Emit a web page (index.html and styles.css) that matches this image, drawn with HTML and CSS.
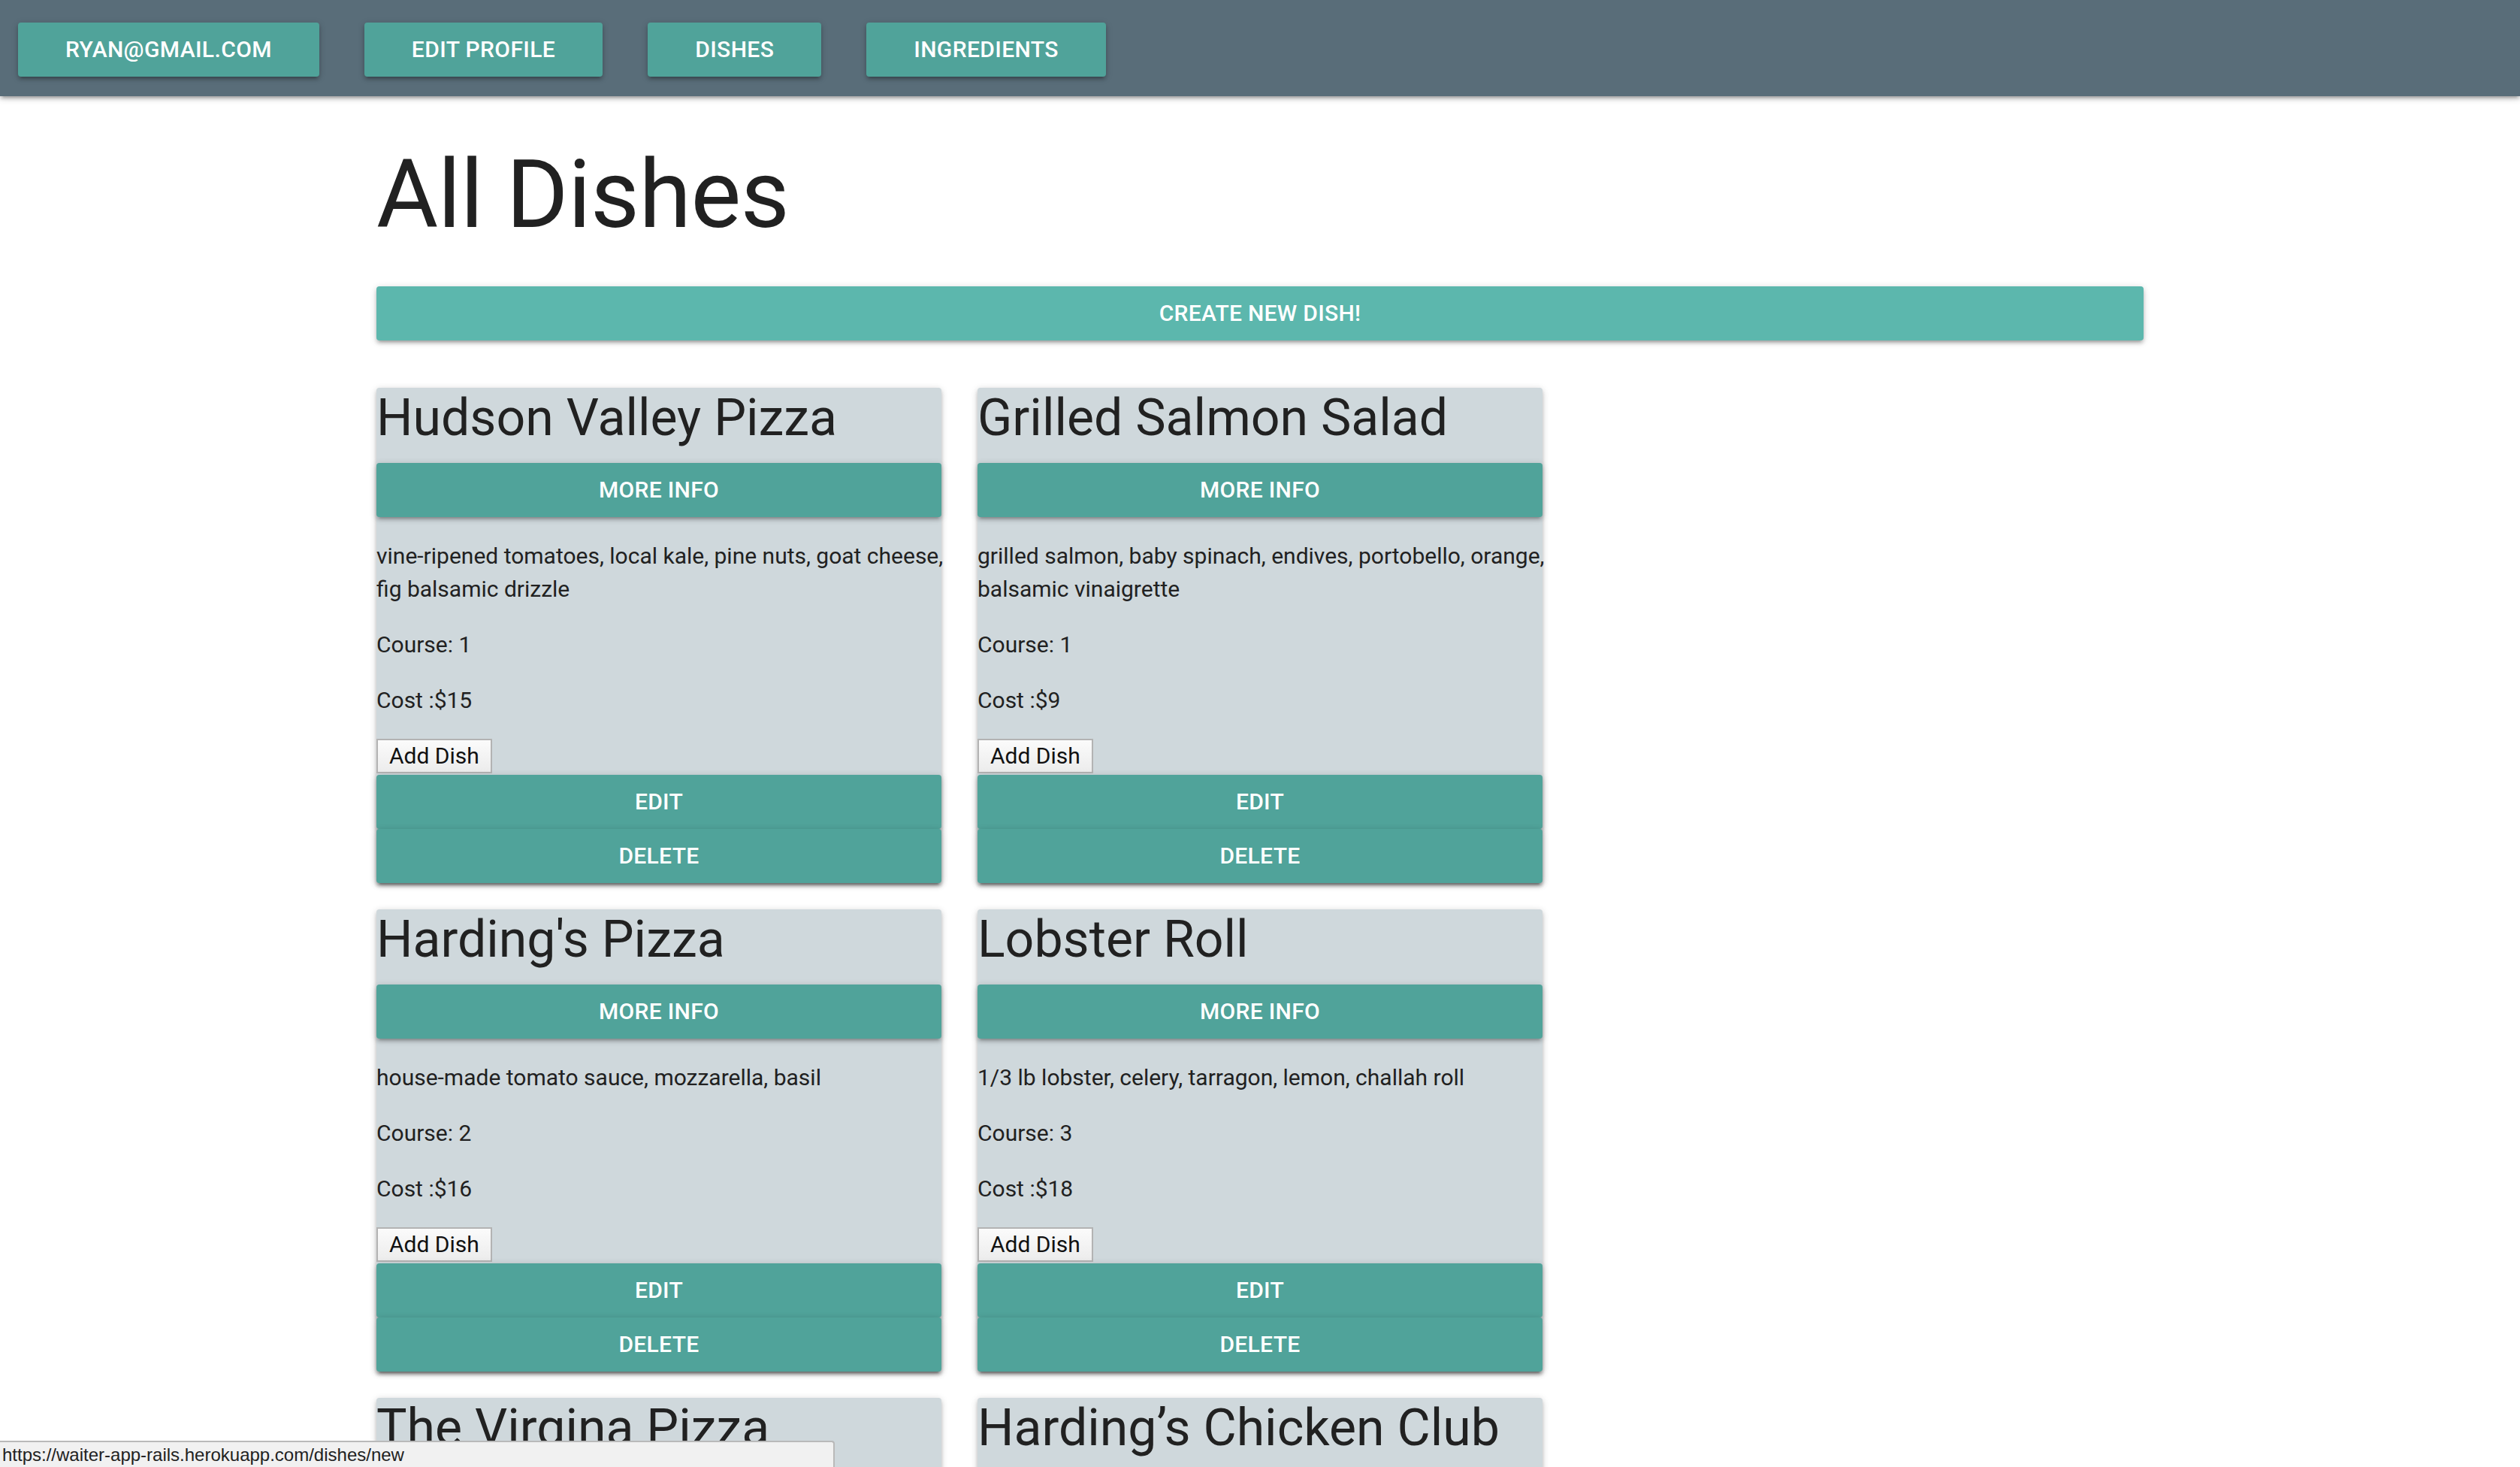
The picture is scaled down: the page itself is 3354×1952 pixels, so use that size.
FILE: index.html
```html
<!DOCTYPE html>
<html lang="en">
<head>
<meta charset="utf-8">
<title>All Dishes</title>
<link rel="stylesheet" href="styles.css">
</head>
<body>
<nav class="topnav">
  <a class="navbtn" href="#">ryan@gmail.com</a>
  <a class="navbtn" href="#">Edit Profile</a>
  <a class="navbtn" href="#">Dishes</a>
  <a class="navbtn" href="#">Ingredients</a>
</nav>

<main class="container">
  <h1 class="page-title">All Dishes</h1>
  <a class="create-btn" href="#">Create New Dish!</a>

  <section class="dish-grid">
    <article class="card">
      <h4 class="card-title">Hudson Valley Pizza</h4>
      <a class="btn" href="#">More Info</a>
      <p class="desc">vine-ripened tomatoes, local kale, pine nuts, goat cheese, fig balsamic drizzle</p>
      <p class="meta">Course: 1</p>
      <p class="meta">Cost :$15</p>
      <button class="add-btn" type="button">Add Dish</button>
      <a class="btn" href="#">Edit</a>
      <a class="btn" href="#">Delete</a>
    </article>

    <article class="card">
      <h4 class="card-title">Grilled Salmon Salad</h4>
      <a class="btn" href="#">More Info</a>
      <p class="desc">grilled salmon, baby spinach, endives, portobello, orange, balsamic vinaigrette</p>
      <p class="meta">Course: 1</p>
      <p class="meta">Cost :$9</p>
      <button class="add-btn" type="button">Add Dish</button>
      <a class="btn" href="#">Edit</a>
      <a class="btn" href="#">Delete</a>
    </article>

    <article class="card">
      <h4 class="card-title">Harding's Pizza</h4>
      <a class="btn" href="#">More Info</a>
      <p class="desc">house-made tomato sauce, mozzarella, basil</p>
      <p class="meta">Course: 2</p>
      <p class="meta">Cost :$16</p>
      <button class="add-btn" type="button">Add Dish</button>
      <a class="btn" href="#">Edit</a>
      <a class="btn" href="#">Delete</a>
    </article>

    <article class="card">
      <h4 class="card-title">Lobster Roll</h4>
      <a class="btn" href="#">More Info</a>
      <p class="desc">1/3 lb lobster, celery, tarragon, lemon, challah roll</p>
      <p class="meta">Course: 3</p>
      <p class="meta">Cost :$18</p>
      <button class="add-btn" type="button">Add Dish</button>
      <a class="btn" href="#">Edit</a>
      <a class="btn" href="#">Delete</a>
    </article>

    <article class="card">
      <h4 class="card-title">The Virgina Pizza</h4>
      <a class="btn" href="#">More Info</a>
    </article>

    <article class="card">
      <h4 class="card-title">Harding’s Chicken Club</h4>
      <a class="btn" href="#">More Info</a>
    </article>
  </section>
</main>

<div class="status-bubble">https://waiter-app-rails.herokuapp.com/dishes/new</div>
</body>
</html>
```

FILE: styles.css
```css
html, body {
  margin: 0;
  padding: 0;
}

body {
  font-family: Roboto, "Noto Sans", sans-serif;
  font-size: 30px;
  line-height: 44px;
  color: rgba(0, 0, 0, 0.87);
  background: #ffffff;
}

a {
  text-decoration: none;
}

/* ---------- top navigation ---------- */
.topnav {
  height: 128px;
  background: #596d79;
  display: flex;
  align-items: center;
  gap: 60px;
  padding: 0 24px;
  box-shadow: 0 4px 4px 0 rgba(0,0,0,.14), 0 6px 2px -4px rgba(0,0,0,.12), 0 2px 10px 0 rgba(0,0,0,.2);
  position: relative;
  z-index: 2;
}

.navbtn {
  display: block;
  height: 72px;
  line-height: 72px;
  padding: 0 63px;
  background: #50a39a;
  color: #ffffff;
  font-size: 30px;
  font-weight: 500;
  letter-spacing: 0.4px;
  text-transform: uppercase;
  border-radius: 4px;
  margin-top: 4px;
  box-shadow: 0 4px 4px 0 rgba(0,0,0,.14), 0 6px 2px -4px rgba(0,0,0,.12), 0 2px 10px 0 rgba(0,0,0,.2);
}

/* ---------- main container ---------- */
.container {
  width: 2352px;
  margin: 0 auto;
}

.page-title {
  font-size: 126px;
  font-weight: 400;
  line-height: 146px;
  margin: 58px 0 49px;
  color: #212121;
  letter-spacing: -0.5px;
}

.create-btn {
  display: block;
  height: 72px;
  line-height: 72px;
  text-align: center;
  background: #5cb7ad;
  color: #ffffff;
  font-size: 30px;
  font-weight: 500;
  letter-spacing: 0.3px;
  text-transform: uppercase;
  border-radius: 4px;
  box-shadow: 0 4px 4px 0 rgba(0,0,0,.14), 0 6px 2px -4px rgba(0,0,0,.12), 0 2px 10px 0 rgba(0,0,0,.2);
}

/* ---------- dish cards ---------- */
.dish-grid {
  display: grid;
  grid-template-columns: 752px 752px;
  column-gap: 48px;
  row-gap: 35px;
  margin-top: 63px;
  align-items: start;
}

.card {
  background: #cfd8dc;
  border-radius: 4px;
  display: flex;
  flex-direction: column;
  align-items: stretch;
  box-shadow: 0 4px 4px 0 rgba(0,0,0,.14), 0 6px 2px -4px rgba(0,0,0,.12), 0 2px 10px 0 rgba(0,0,0,.2);
}

.card-title {
  font-size: 68px;
  font-weight: 400;
  line-height: 80px;
  margin: 0 0 20px;
  color: #212121;
  white-space: nowrap;
}

.btn {
  display: block;
  height: 72px;
  line-height: 72px;
  text-align: center;
  background: #50a39a;
  color: #ffffff;
  font-size: 30px;
  font-weight: 500;
  letter-spacing: 0.3px;
  text-transform: uppercase;
  border-radius: 4px;
  box-shadow: 0 4px 4px 0 rgba(0,0,0,.14), 0 6px 2px -4px rgba(0,0,0,.12), 0 2px 10px 0 rgba(0,0,0,.2);
}

.desc, .meta {
  margin: 30px 0 0;
  color: #212121;
}

.desc {
  margin-right: -10px;
}

.add-btn {
  align-self: flex-start;
  margin-top: 29px;
  height: 46px;
  padding: 0 15px;
  font-family: Roboto, "Noto Sans", sans-serif;
  font-size: 30px;
  line-height: 42px;
  color: #111111;
  background: linear-gradient(#fbfbfb, #ececec);
  border: 2px solid #b3b3b3;
  border-radius: 0;
}

.add-btn + .btn {
  margin-top: 2px;
}

/* ---------- browser status bubble ---------- */
.status-bubble {
  position: fixed;
  left: 0;
  bottom: 0;
  width: 1106px;
  height: 33px;
  padding-left: 3px;
  background: #f1f1f1;
  border-top: 2px solid #b9b9b9;
  border-right: 2px solid #b9b9b9;
  border-top-right-radius: 4px;
  font-family: "Liberation Sans", Arial, sans-serif;
  font-size: 24px;
  line-height: 33px;
  color: #222222;
  z-index: 5;
}
```
